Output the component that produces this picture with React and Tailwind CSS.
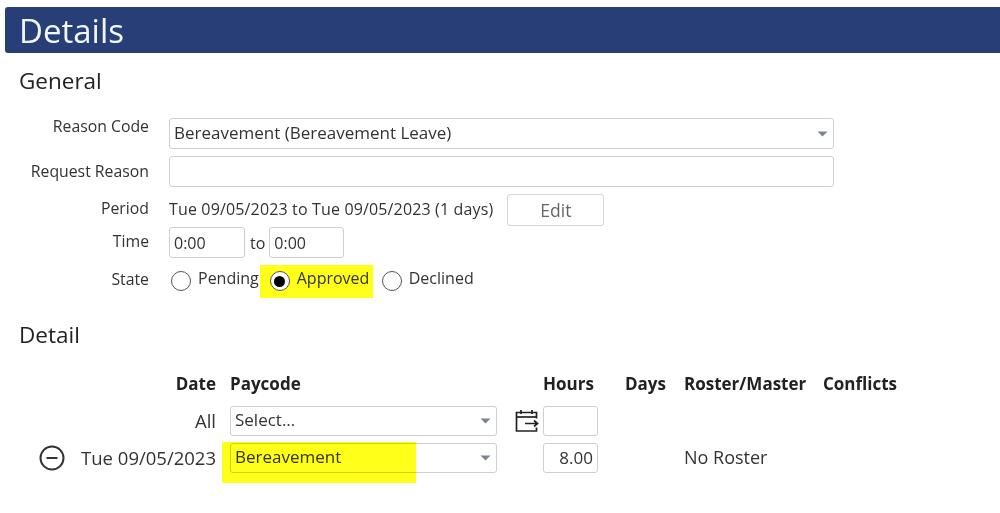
import * as React from "react";

const font = { fontFamily: '"Open Sans", "Noto Sans", sans-serif' };

function Caret() {
  return (
    <svg width="11" height="6" viewBox="0 0 11 6" className="shrink-0">
      <path d="M0.5 0.5H10.5L5.5 5.5Z" fill="#7b8492" />
    </svg>
  );
}

function SelectBox({ value, className = "" }) {
  return (
    <div
      className={`flex items-center justify-between rounded-[3px] border border-[#cfcfcf] pl-1 text-[17px] text-[#333] ${className}`}
    >
      <span className="mb-[2px]">{value}</span>
      <span className="pr-[5px]">
        <Caret />
      </span>
    </div>
  );
}

function TextBox({ value = "", className = "" }) {
  return (
    <div className={`flex items-center rounded-[3px] border border-[#cfcfcf] px-1 text-[16px] text-[#333] ${className}`}>
      {value}
    </div>
  );
}

function Radio({ checked }) {
  return (
    <span className="mb-[1px] flex h-5 w-5 shrink-0 items-center justify-center rounded-full border border-[#555] bg-white">
      {checked && <span className="h-[11px] w-[11px] rounded-full bg-black" />}
    </span>
  );
}

function FormRow({ label, labelClass = "", className = "", children }) {
  return (
    <div className={`flex items-center ${className}`}>
      <div className={`w-[149px] shrink-0 text-right text-[15.8px] text-[#333] ${labelClass}`}>{label}</div>
      <div className="ml-5 flex items-center">{children}</div>
    </div>
  );
}

function CalendarArrow() {
  return (
    <svg width="24" height="24" viewBox="0 0 24 24" fill="none" stroke="#222" strokeWidth="1.7">
      <path d="M21.5 9.5V3.5H1.5V22H21.5V18.5" />
      <path d="M1.5 8H21.5" />
      <path d="M6 1V5M17 1V5" />
      <path d="M10 14.5H22.5M19 11.5L22.5 14.5L19 17.5" />
    </svg>
  );
}

function MinusCircle() {
  return (
    <svg width="26" height="26" viewBox="0 0 26 26" fill="none" stroke="#333" strokeWidth="2">
      <circle cx="13" cy="13" r="11.5" />
      <path d="M7.5 13H18.5" />
    </svg>
  );
}

function Header({ children, className = "" }) {
  return <div className={`text-[17px] font-bold text-[#222] ${className}`}>{children}</div>;
}

export default function App() {
  return (
    <div className="h-[513px] w-[1000px] overflow-hidden bg-white pt-[7px]" style={font}>
      <div className="ml-[5px] flex h-[46px] items-center rounded-l-[3px] bg-[#273f76] pl-[14px] text-[33px] leading-none text-[#f2f6fa]">
        Details
      </div>

      <h2 className="mt-[13px] ml-[19px] text-[22.5px] leading-[30px] text-[#222]">General</h2>

      <div className="mt-[22px] flex flex-col">
        <FormRow label="Reason Code" labelClass="mb-[14px]" className="h-[31px]">
          <SelectBox value="Bereavement (Bereavement Leave)" className="h-[31px] w-[665px]" />
        </FormRow>
        <FormRow label="Request Reason" className="mt-[7px] h-[31px]">
          <TextBox className="h-[31px] w-[665px]" />
        </FormRow>
        <FormRow label="Period" labelClass="mb-[2px]" className="mt-[7px] h-[32px]">
          <span className="mb-[2px] text-[16px] tracking-[0.15px] whitespace-nowrap text-[#333]">
            Tue 09/05/2023 to Tue 09/05/2023 (1 days)
          </span>
          <button className="ml-[14px] flex h-[32px] w-[97px] items-center justify-center rounded-[3px] border border-[#d6d6d6] text-[17.5px] text-[#666]">
            Edit
          </button>
        </FormRow>
        <FormRow label="Time" labelClass="mb-[2px]" className="mt-[1px] h-[31px]">
          <TextBox value="0:00" className="h-[31px] w-[76px]" />
          <span className="mr-[4px] ml-[5px] text-[16px] text-[#333]">to</span>
          <TextBox value="0:00" className="h-[31px] w-[75px]" />
        </FormRow>
        <FormRow label="State" labelClass="mb-[4px]" className="mt-[7px] h-[33px]">
          <span className="ml-[2px]">
            <Radio />
          </span>
          <span className="mb-[7px] ml-[7px] text-[16px] text-[#333]">Pending</span>
          <div className="mr-[9px] ml-[1px] flex h-[33px] w-[113px] items-center gap-[7px] bg-[#ffff19] pl-[10px] text-[16px] text-[#333]">
            <Radio checked />
            <span className="mb-[7px]">Approved</span>
          </div>
          <Radio />
          <span className="mb-[7px] ml-[7px] text-[16px] text-[#333]">Declined</span>
        </FormRow>
      </div>

      <h2 className="mt-[22px] ml-[19px] text-[22.5px] leading-[30px] text-[#222]">Detail</h2>

      <div className="mt-[21px] grid grid-cols-[216px_281px_46px_82px_59px_139px_1fr] items-center">
        <Header className="text-right">Date</Header>
        <Header className="ml-[14px] whitespace-nowrap">Paycode</Header>
        <div />
        <Header>Hours</Header>
        <Header>Days</Header>
        <Header className="whitespace-nowrap">Roster/Master</Header>
        <Header>Conflicts</Header>
      </div>

      <div className="mt-[9px] grid h-[30px] grid-cols-[216px_281px_46px_55px] items-center">
        <div className="text-right text-[18.5px] text-[#333]">All</div>
        <SelectBox value="Select..." className="ml-[14px] h-[30px]" />
        <div className="flex justify-end pr-[4px]">
          <CalendarArrow />
        </div>
        <TextBox className="h-[30px]" />
      </div>

      <div className="mt-[7px] grid h-[30px] grid-cols-[216px_281px_46px_55px_86px_1fr] items-center">
        <div className="flex items-center justify-end gap-[16px] text-[18.5px] whitespace-nowrap text-[#333]">
          <MinusCircle />
          <span>Tue 09/05/2023</span>
        </div>
        <div className="relative ml-[14px]">
          <SelectBox value="Bereavement" className="h-[30px]" />
          <div className="absolute top-[-1px] left-[-8px] h-[41px] w-[194px] bg-[#ffff19] mix-blend-multiply" />
        </div>
        <div />
        <TextBox value="8.00" className="h-[30px] justify-end text-[17px]" />
        <div />
        <div className="text-[18px] whitespace-nowrap text-[#333]">No Roster</div>
      </div>
    </div>
  );
}
